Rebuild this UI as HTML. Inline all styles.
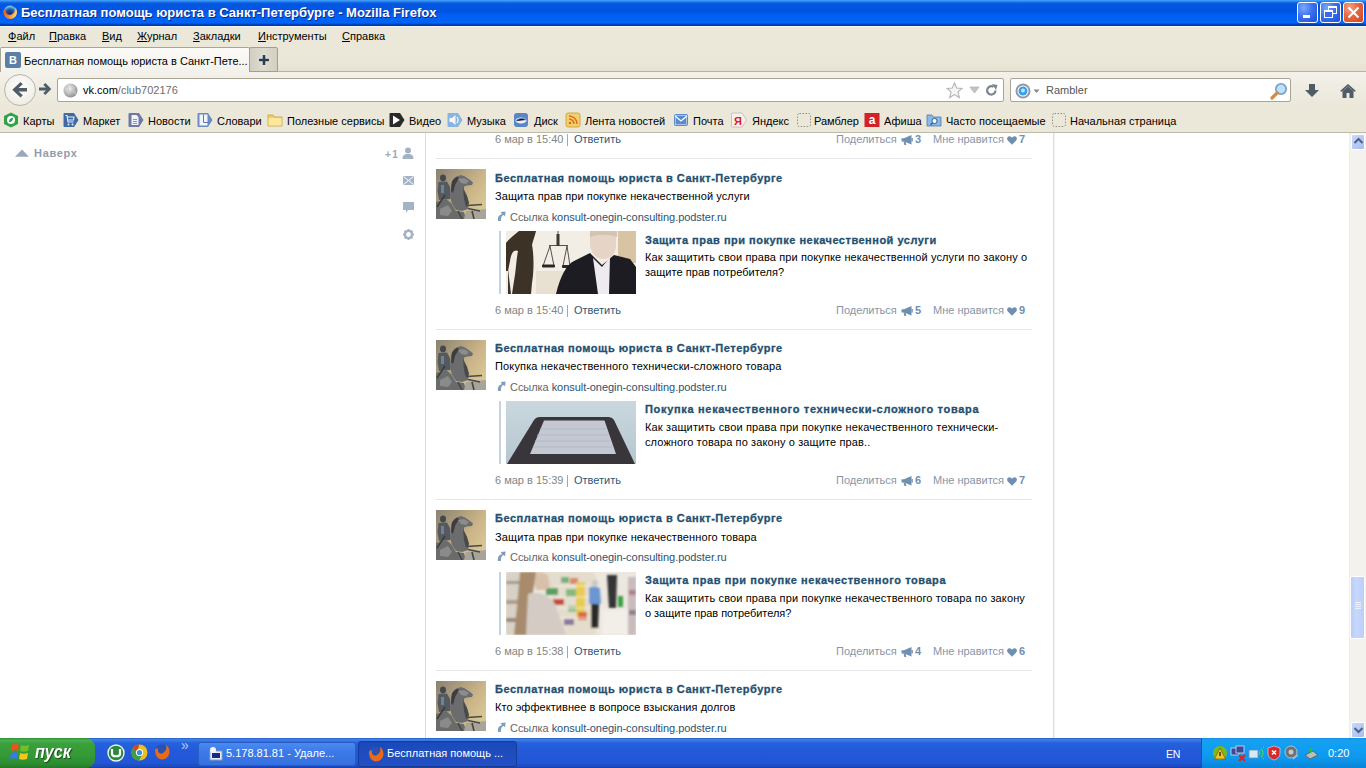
<!DOCTYPE html><html><head><meta charset="utf-8"><style>
*{margin:0;padding:0;box-sizing:border-box}
html,body{width:1366px;height:768px;overflow:hidden;background:#fff;font-family:"Liberation Sans",sans-serif;position:relative}
div,span,svg{position:absolute}
.nw{white-space:nowrap}
#title{left:0;top:0;width:1366px;height:26px;background:linear-gradient(#3d9af9 0,#3d9af9 1px,#1a6ee8 2px,#0557e0 4px,#0054e0 12px,#005ff6 15px,#0064f4 23px,#0048c8 24px,#002e98 26px)}
#title .t{left:21px;top:5px;color:#fff;font-weight:bold;font-size:13px;line-height:16px;text-shadow:1px 1px 0 #0b2a8a}
.wbtn{top:2px;width:21px;height:21px;border:1px solid #fff;border-radius:3px}
#menu{left:0;top:26px;width:1366px;height:21px;background:#ebe8d9;font-size:11px;line-height:13px;color:#000}
#menu span{top:4px}
#tabs{left:0;top:47px;width:1366px;height:25px;background:linear-gradient(#ebe8d9 0,#ebe8d9 60%,#e6e0d0 100%)}
#nav{left:0;top:72px;width:1366px;height:35px;background:linear-gradient(#f3f1ea,#efede3 40%,#ebe8da)}
#bm{left:0;top:107px;width:1366px;height:26px;background:#ebe8d9;font-size:11px;line-height:13px;border-bottom:1px solid #bfbbaa}
#bm span{top:8px;color:#000}
#bm svg{top:5px}
#content{left:0;top:133px;width:1349px;height:605px;background:#fff;overflow:hidden}
#sb{left:1349px;top:133px;width:17px;height:605px;background:#f4f2ec}
#task{left:0;top:738px;width:1366px;height:30px;background:linear-gradient(#1f4fb4 0,#3c80e8 1px,#3a7de6 2px,#2561dd 5px,#2358d8 15px,#2156d6 25px,#1c48b8 29px,#173d9c 30px)}
.f11{font-size:11px;line-height:13px}
.lnk{color:#2b587a}
.ttl{font-weight:bold;letter-spacing:0.5px;color:#24506f;-webkit-text-stroke:0.3px #24506f}
</style></head><body>
<div id="title">
<svg style="left:2px;top:4px" width="16" height="16" viewBox="0 0 16 16">
<defs><linearGradient id="fxg" x1="0" y1="0" x2="1" y2="0.3"><stop offset="0" stop-color="#e8501a"/><stop offset="0.6" stop-color="#f08a30"/><stop offset="1" stop-color="#f8d070"/></linearGradient>
<radialGradient id="fxb" cx="0.5" cy="0.65" r="0.6"><stop offset="0" stop-color="#152a6a"/><stop offset="0.6" stop-color="#2a5aa8"/><stop offset="1" stop-color="#70c8e8"/></radialGradient></defs>
<circle cx="8" cy="7.8" r="6.2" fill="url(#fxb)"/>
<path d="M1.3 6.5 C1 11.5 4.5 15 8.2 15 C12 15 15 12 15 8 C15 5.8 14.2 4.3 13.2 3.3 C13.6 6.5 12 10.2 8.6 10.8 C5.2 11.2 3 8.6 3.2 5 C2.3 5.4 1.6 5.8 1.3 6.5 Z" fill="url(#fxg)"/>
</svg>
<div class="t nw">Бесплатная помощь юриста в Санкт-Петербурге - Mozilla Firefox</div>
<div class="wbtn" style="left:1297px;background:radial-gradient(ellipse at 30% 25%,#7aa8ff 0,#3d72ee 45%,#2a5de0 75%,#2250cf 100%)"><div style="left:5px;top:12px;width:7px;height:3px;background:#fff"></div></div>
<div class="wbtn" style="left:1320px;background:radial-gradient(ellipse at 30% 25%,#7aa8ff 0,#3d72ee 45%,#2a5de0 75%,#2250cf 100%)"><div style="left:7px;top:3px;width:9px;height:8px;border:1px solid #fff;border-top-width:2px"></div><div style="left:3px;top:7px;width:9px;height:8px;border:1px solid #fff;border-top-width:2px;background:#3a6ae6"></div></div>
<div class="wbtn" style="left:1343px;background:radial-gradient(ellipse at 30% 25%,#f7a287 0,#e8653e 45%,#d9512c 80%,#c7421f 100%)">
<svg style="left:3px;top:3px" width="13" height="13" viewBox="0 0 13 13"><path d="M1.5 1.5 L11.5 11.5 M11.5 1.5 L1.5 11.5" stroke="#fff" stroke-width="2"/></svg></div>
</div>
<div id="menu"><div style="left:0;top:0;width:1366px;height:1px;background:#f6f8fc"></div>
<span class="nw" style="left:8px"><u>Ф</u>айл</span>
<span class="nw" style="left:49px"><u>П</u>равка</span>
<span class="nw" style="left:102px"><u>В</u>ид</span>
<span class="nw" style="left:137px"><u>Ж</u>урнал</span>
<span class="nw" style="left:193px"><u>З</u>акладки</span>
<span class="nw" style="left:258px"><u>И</u>нструменты</span>
<span class="nw" style="left:342px"><u>С</u>правка</span>
</div>
<div id="tabs">
<div style="left:0;top:0;width:250px;height:25px;border:1px solid #a9a595;border-bottom:none;border-radius:2px 2px 0 0;background:linear-gradient(#fbfaf7,#f6f5f0 60%,#f3f1ea)"></div>
<div style="left:250px;top:24px;width:1116px;height:1px;background:#b7b3a2"></div>
<div style="left:5px;top:5px;width:16px;height:16px;background:#5b7fa6;border-radius:2px;color:#fff;font-weight:bold;font-size:11px;line-height:16px;text-align:center">В</div>
<span class="nw f11" style="left:24px;top:8px;color:#000">Бесплатная помощь юриста в Санкт-Пете...</span>
<div style="left:249px;top:0;width:29px;height:25px;border:1px solid #a39f8f;border-radius:2px 2px 0 0;background:linear-gradient(90deg,#d2cec0,#dedbcf 50%,#d2cec0)"></div>
<svg style="left:257px;top:6px" width="14" height="14" viewBox="0 0 14 14"><path d="M7 1.5V12.5M1.5 7H12.5" stroke="#dfe8f0" stroke-width="4.5"/><path d="M7 2V12M2 7H12" stroke="#2e3c48" stroke-width="2.6"/></svg>
</div>
<div id="nav">
<div style="left:4px;top:2px;width:32px;height:32px;border-radius:50%;border:1px solid #b9b6a8;background:radial-gradient(circle at 50% 40%,#ffffff,#f0eee6 70%,#e2dfd2)"></div>
<svg style="left:11px;top:9px" width="17" height="17" viewBox="0 0 17 17"><path d="M1.3 8.8 L9.5 1 L11.8 3.3 L7.6 7 H16 V10.6 H7.6 L11.8 14.3 L9.5 16.6 Z" fill="#505c68"/></svg>
<svg style="left:38px;top:10px" width="14" height="14" viewBox="0 0 14 14"><path d="M13.3 7 L7.3 1 L5.3 3 L8 5.5 H1 V8.5 H8 L5.3 11 L7.3 13 Z" fill="#505c68"/></svg>
<div style="left:57px;top:6px;width:947px;height:24px;background:#fff;border:1px solid #a8a597;border-radius:2px"></div>
<svg style="left:63px;top:11px" width="15" height="15" viewBox="0 0 15 15"><defs><radialGradient id="gl" cx="0.4" cy="0.35" r="0.7"><stop offset="0" stop-color="#f4f4f4"/><stop offset="1" stop-color="#8a8a8a"/></radialGradient></defs><circle cx="7.5" cy="7.5" r="7" fill="url(#gl)"/><path d="M3 4 C5 3 6 5 5 7 C4 9 6 10 6 12 M9 2 C8 4 10 5 12 5 M10 9 C11 8 13 9 12 11" stroke="#c8c8c8" stroke-width="1.2" fill="none"/></svg>
<span class="nw" style="left:83px;top:11px;font-size:11px;line-height:14px;color:#000">vk.com<span style="position:static;color:#6d6d6d">/club702176</span></span>
<svg style="left:946px;top:10px" width="17" height="17" viewBox="0 0 17 17"><path d="M8.5 1 L10.7 6 L16 6.4 L12 9.9 L13.3 15.5 L8.5 12.6 L3.7 15.5 L5 9.9 L1 6.4 L6.3 6 Z" fill="#f4f4f4" stroke="#b4b4b4" stroke-width="1.1"/></svg>
<svg style="left:969px;top:14px" width="11" height="8" viewBox="0 0 11 8"><path d="M1 1 H10 L5.5 7 Z" fill="#c4c4c4" stroke="#b4b4b4" stroke-width="0.8"/></svg>
<svg style="left:985px;top:12px" width="13" height="13" viewBox="0 0 13 13"><path d="M10.5 6.5 A4.2 4.2 0 1 1 8.6 2.9" fill="none" stroke="#7b8690" stroke-width="2.2"/><path d="M7 0 L12.5 1 L11 6 Z" fill="#7b8690"/></svg>
<div style="left:1010px;top:6px;width:281px;height:24px;background:#fff;border:1px solid #a8a597;border-radius:2px"></div>
<svg style="left:1015px;top:11px" width="16" height="16" viewBox="0 0 16 16"><circle cx="8" cy="8" r="6.5" fill="none" stroke="#8f9aa6" stroke-width="2"/><circle cx="8" cy="8" r="4.5" fill="#3aa0e8"/><circle cx="8" cy="7.5" r="2" fill="#bfe4ff"/></svg>
<svg style="left:1033px;top:17px" width="8" height="5" viewBox="0 0 8 5"><path d="M0.5 0.5H6.5L3.5 4Z" fill="#8a8a8a"/></svg>
<span class="nw" style="left:1046px;top:11px;font-size:11px;line-height:14px;color:#555">Rambler</span>
<svg style="left:1270px;top:10px" width="18" height="18" viewBox="0 0 18 18"><circle cx="11" cy="7" r="5.2" fill="#bfe0fa" stroke="#6f9ec4" stroke-width="1.6"/><path d="M7.2 10.8 L2 16" stroke="#d68a3c" stroke-width="3.2" stroke-linecap="round"/></svg>
<svg style="left:1304px;top:11px" width="16" height="16" viewBox="0 0 16 16"><path d="M5 1 H11 V7 H15 L8 14 L1 7 H5 Z" fill="#4f5b66"/></svg>
<svg style="left:1339px;top:11px" width="18" height="16" viewBox="0 0 18 16"><path d="M9 1 L17 8 L15.5 8.8 L9 3.3 L2.5 8.8 L1 8 Z" fill="#4f5b66"/><path d="M3.5 8 L9 3.5 L14.5 8 V15 H10.5 V10 H7.5 V15 H3.5 Z" fill="#4f5b66"/></svg>
</div>
<div id="bm">
<svg style="left:3px;top:5px" width="16" height="16" viewBox="0 0 16 16"><path d="M8 0.5 L15 4 V12 L8 15.5 L1 12 V4 Z" fill="#2fa24a"/><circle cx="8" cy="8" r="4" fill="#fff"/><path d="M6 10 C6 7 8 6 10 5.5 C10 8 9 10 6 10Z" fill="#2fa24a"/></svg>
<span class="nw" style="left:23px">Карты</span>
<svg style="left:63px;top:5px" width="16" height="16" viewBox="0 0 16 16"><path d="M1.5 1 H11 L15.5 8 L11 15 H1.5 Q0.5 15 0.5 14 V2 Q0.5 1 1.5 1 Z" fill="#3f6aa6"/><path d="M2.5 3.5 H4 L5 10 H10.5 M4.5 5 H11 L10.5 8 H5" fill="none" stroke="#e8f0fa" stroke-width="1.1"/><circle cx="5.5" cy="12.5" r="1" fill="#e8f0fa"/><circle cx="9.5" cy="12.5" r="1" fill="#e8f0fa"/></svg>
<span class="nw" style="left:83px">Маркет</span>
<svg style="left:128px;top:5px" width="16" height="16" viewBox="0 0 16 16"><path d="M1.5 1 H11 L15.5 8 L11 15 H1.5 Q0.5 15 0.5 14 V2 Q0.5 1 1.5 1 Z" fill="#7078a8"/><path d="M3.5 3 H8.5 L10.5 5 V13 H3.5 Z" fill="#f2f4fa"/><path d="M5 7.5h4M5 9.5h4M5 11.5h4" stroke="#7078a8" stroke-width="0.8"/></svg>
<span class="nw" style="left:148px">Новости</span>
<svg style="left:197px;top:5px" width="16" height="16" viewBox="0 0 16 16"><path d="M1.5 1 H11 L15.5 8 L11 15 H1.5 Q0.5 15 0.5 14 V2 Q0.5 1 1.5 1 Z" fill="#6a8cc0"/><rect x="2.5" y="2.5" width="8" height="11" fill="#f2f5fa"/><path d="M6.5 2.5 V10.5 H12" stroke="#5a7ab0" stroke-width="1" fill="none"/></svg>
<span class="nw" style="left:217px">Словари</span>
<svg style="left:267px;top:5px" width="16" height="16" viewBox="0 0 16 16"><path d="M1 3 H6 L7.5 5 H15 V14 H1 Z" fill="#f0d060" stroke="#c8a030" stroke-width="0.8"/><rect x="1.5" y="6" width="13" height="7.5" fill="#fbe89a"/></svg>
<span class="nw" style="left:287px">Полезные сервисы</span>
<svg style="left:389px;top:5px" width="16" height="16" viewBox="0 0 16 16"><path d="M1.5 1 H11 L15.5 8 L11 15 H1.5 Q0.5 15 0.5 14 V2 Q0.5 1 1.5 1 Z" fill="#2a2a2a"/><path d="M4 3.5 L11 8 L4 12.5 Z" fill="#fff"/></svg>
<span class="nw" style="left:409px">Видео</span>
<svg style="left:447px;top:5px" width="16" height="16" viewBox="0 0 16 16"><path d="M1.5 1 H11 L15.5 8 L11 15 H1.5 Q0.5 15 0.5 14 V2 Q0.5 1 1.5 1 Z" fill="#8ab4e0"/><path d="M2.5 6 H5 L8.5 3 V13 L5 10 H2.5 Z" fill="#f4f8fc"/><path d="M10 5 C11.5 7 11.5 9 10 11" stroke="#fff" stroke-width="1.1" fill="none"/></svg>
<span class="nw" style="left:467px">Музыка</span>
<svg style="left:513px;top:5px" width="16" height="16" viewBox="0 0 16 16"><rect x="1" y="1" width="14" height="14" rx="3" fill="#5a86c8"/><ellipse cx="8" cy="8.5" rx="5.5" ry="3" fill="#e8f0fa"/><path d="M3 9 C6 6 10 6 13 8" stroke="#5a86c8" stroke-width="1"/></svg>
<span class="nw" style="left:534px">Диск</span>
<svg style="left:565px;top:5px" width="16" height="16" viewBox="0 0 16 16"><rect x="1" y="1" width="14" height="14" rx="2" fill="#f2d070" stroke="#c89a30" stroke-width="0.8"/><circle cx="5" cy="11" r="1.3" fill="#e06a10"/><path d="M4 7 A5 5 0 0 1 9 12 M4 4 A8 8 0 0 1 12 12" stroke="#e06a10" stroke-width="1.4" fill="none"/></svg>
<span class="nw" style="left:585px">Лента новостей</span>
<svg style="left:673px;top:5px" width="16" height="16" viewBox="0 0 16 16"><rect x="1" y="2" width="14" height="12" rx="2" fill="#5a8ad0"/><path d="M2 4 L8 9 L14 4" stroke="#fff" stroke-width="1.3" fill="none"/><rect x="2.5" y="3.5" width="11" height="9" fill="none" stroke="#dfe8f6" stroke-width="0.6"/></svg>
<span class="nw" style="left:693px">Почта</span>
<svg style="left:731px;top:5px" width="16" height="16" viewBox="0 0 16 16"><path d="M1.5 1 H11 L15.5 8 L11 15 H1.5 Q0.5 15 0.5 14 V2 Q0.5 1 1.5 1 Z" fill="#f4f2f0" stroke="#c0b8b0" stroke-width="0.8"/><text x="7" y="12.5" font-size="11" font-weight="bold" text-anchor="middle" fill="#e02020" font-family="Liberation Sans">Я</text></svg>
<span class="nw" style="left:752px">Яндекс</span>
<svg style="left:796px;top:5px" width="16" height="16" viewBox="0 0 16 16"><rect x="1.5" y="1.5" width="13" height="13" rx="2" fill="none" stroke="#777" stroke-width="0.8" stroke-dasharray="1.5 1.5"/></svg>
<span class="nw" style="left:814px">Рамблер</span>
<svg style="left:864px;top:5px" width="16" height="16" viewBox="0 0 16 16"><rect x="0.5" y="1" width="15" height="14" fill="#d42026"/><text x="8" y="12" font-size="12" font-weight="bold" text-anchor="middle" fill="#fff" font-family="Liberation Sans">a</text></svg>
<span class="nw" style="left:884px">Афиша</span>
<svg style="left:926px;top:5px" width="16" height="16" viewBox="0 0 16 16"><path d="M1 3 H6 L7.5 5 H15 V14 H1 Z" fill="#8ab8e8" stroke="#4a7ab8" stroke-width="0.8"/><circle cx="8.5" cy="9" r="2.6" fill="#fff" stroke="#2a5a98" stroke-width="1"/><path d="M6.5 11 L4.5 13" stroke="#2a5a98" stroke-width="1.3"/></svg>
<span class="nw" style="left:946px">Часто посещаемые</span>
<svg style="left:1051px;top:5px" width="16" height="16" viewBox="0 0 16 16"><rect x="1.5" y="1.5" width="13" height="13" rx="2" fill="none" stroke="#777" stroke-width="0.8" stroke-dasharray="1.5 1.5"/></svg>
<span class="nw" style="left:1070px">Начальная страница</span>
</div>
<div id="content">
<div style="left:425px;top:0;width:1px;height:605px;background:#dcdcdc"></div>
<div style="left:1053px;top:0;width:1px;height:605px;background:#dcdcdc"></div>
<div style="left:1054px;top:0;width:1px;height:605px;background:#f3f3f3"></div>
</div>
<svg style="left:15px;top:149px" width="14" height="8" viewBox="0 0 14 8"><path d="M7 0.5 L14 7.8 H0 Z" fill="#9aa8bc"/></svg>
<span class="nw f11" style="left:34px;top:147px;font-weight:bold;color:#909cac;letter-spacing:0.7px">Наверх</span>
<span class="nw" style="left:385px;top:149px;font-size:10px;line-height:12px;font-weight:bold;color:#a0a8b4;letter-spacing:1.5px">+1</span>
<svg style="left:402px;top:147px" width="12" height="12" viewBox="0 0 12 12"><circle cx="6" cy="3.5" r="3" fill="#a4b2c4"/><path d="M0.5 12 C0.5 8 2.5 7 6 7 C9.5 7 11.5 8 11.5 12 Z" fill="#a4b2c4"/></svg>
<svg style="left:403px;top:176px" width="11" height="9" viewBox="0 0 11 9"><rect width="11" height="9" fill="#a4b4c8"/><path d="M0.5 0.5 L10.5 8.5 M10.5 0.5 L0.5 8.5" stroke="#fff" stroke-width="1"/></svg>
<svg style="left:403px;top:202px" width="11" height="12" viewBox="0 0 11 12"><path d="M0 0 H11 V8 H5 L3 11 V8 H0 Z" fill="#a4b4c8"/></svg>
<svg style="left:403px;top:229px" width="11" height="11" viewBox="0 0 11 11"><circle cx="5.5" cy="5.5" r="3.6" fill="none" stroke="#a4b2c4" stroke-width="2.4"/><path d="M5.5 0 V2.2 M5.5 8.8 V11 M0 5.5 H2.2 M8.8 5.5 H11 M1.6 1.6 L3.1 3.1 M7.9 7.9 L9.4 9.4 M9.4 1.6 L7.9 3.1 M3.1 7.9 L1.6 9.4" stroke="#a4b2c4" stroke-width="2"/></svg>
<span class="nw f11" style="left:495px;top:133px;color:#858585">6 мар в 15:40</span>
<div style="left:567px;top:134px;width:1px;height:12px;background:#a8a8a8"></div>
<span class="nw f11 lnk" style="left:574px;top:133px">Ответить</span>
<span class="nw f11" style="left:836px;top:133px;color:#8596a8">Поделиться</span>
<svg style="left:901px;top:135px" width="12" height="10" viewBox="0 0 12 10"><path d="M0.5 3.2 H3 L10.5 0 V9.5 L3 6.5 H0.5 Z" fill="#6f8fb0"/><path d="M2.5 6.5 L4.5 6.5 L5.3 10 L3.4 10 Z" fill="#6f8fb0"/><rect x="10.5" y="3" width="1.3" height="3.5" fill="#6f8fb0"/></svg>
<span class="nw f11" style="left:915px;top:133px;color:#6f8fb0;font-weight:bold">3</span>
<span class="nw f11" style="left:933px;top:133px;color:#8596a8">Мне нравится</span>
<svg style="left:1007px;top:136px" width="10" height="9" viewBox="0 0 10 9"><path d="M5 8.8 L0.8 4.5 C-0.5 3 0 0.3 2.5 0.2 C3.7 0.2 4.5 1 5 1.8 C5.5 1 6.3 0.2 7.5 0.2 C10 0.3 10.5 3 9.2 4.5 Z" fill="#6f8fb0"/></svg>
<span class="nw f11" style="left:1019px;top:133px;color:#6f8fb0;font-weight:bold">7</span>
<div style="left:436px;top:158px;width:596px;height:1px;background:#e4e6ea"></div>
<svg style="left:436px;top:169px" width="50" height="50" viewBox="0 0 50 50">
<defs><linearGradient id="avg1" x1="0" y1="0" x2="1" y2="0.7"><stop offset="0" stop-color="#8a8272"/><stop offset="0.35" stop-color="#ab9c7c"/><stop offset="0.7" stop-color="#cdb68a"/><stop offset="1" stop-color="#d8c794"/></linearGradient>
<filter id="avf1" x="-5%" y="-5%" width="110%" height="110%"><feGaussianBlur stdDeviation="0.6"/></filter></defs>
<rect width="50" height="50" fill="url(#avg1)"/>
<g filter="url(#avf1)">
<ellipse cx="7" cy="9" rx="3" ry="3.4" fill="#44484c"/>
<path d="M2.5 13 L11 12.5 L14 18 L14.5 30 L3 31 L1.5 22 Z" fill="#535a62"/>
<path d="M5 16 L8 16 L8 24 L5 24 Z" fill="#7a8088"/>
<path d="M15 15 L18 9 L22 7 L25 6 L29 7.5 L34 11 L37 13.5 L36 16 L31 16.5 L28 17.5 L28 21 L31 27 L33 34 L32 40 L26 42 L20 41 L16 35 L14 27 Z" fill="#6a6c6e"/>
<path d="M16 12 L21 7.5 L23 9 L19 16 L17 24 L15 22 Z" fill="#3e3e3e"/>
<path d="M22 10 L28 9 L33 12 L30 15 L25 14 Z" fill="#8c8c8a"/>
<path d="M27 19 L31 27 L33 34 L30 38 L28 30 Z" fill="#4a4a4a"/>
<path d="M0 33 L10 30 L15 34 L20 42 L28 43 L30 50 L0 50 Z" fill="#6a6c6c"/>
<path d="M4 40 L12 36 L16 42 L12 47 L4 46 Z" fill="#8a8a88"/>
<path d="M30 42 L50 40 V50 H28 Z" fill="#a8a49a"/>
<path d="M31 36.5 L46 35.5 M32 39.5 L44 42" stroke="#4a4a4a" stroke-width="1.5"/>
<path d="M1 38 L9 26" stroke="#3a3a3a" stroke-width="1.4"/>
<path d="M22 42 L26 50 M36 42 L38 50" stroke="#444" stroke-width="1.6"/>
</g>
</svg>
<span class="nw f11 ttl" style="left:495px;top:172px;letter-spacing:0.52px">Бесплатная помощь юриста в Санкт-Петербурге</span>
<span class="nw f11" style="left:495px;top:190px;color:#000;letter-spacing:0.09px">Защита прав при покупке некачественной услуги</span>
<svg style="left:497px;top:211px" width="9" height="11" viewBox="0 0 9 11"><path d="M1 10 C0.5 6 2 3.5 5 3.2 L3.8 1 L8.5 0.6 L8.2 5.5 L6.8 4 C5 4.3 3.8 6 3.8 10 Z" fill="#7f9cbc"/></svg>
<span class="nw f11" style="left:510px;top:211px;color:#666;letter-spacing:-0.05px">Ссылка <span style="position:static;color:#2b5272">konsult-onegin-consulting.podster.ru</span></span>
<div style="left:499px;top:231px;width:2px;height:63px;background:#c5d2e0"></div>
<svg style="left:506px;top:231px" width="130" height="63" viewBox="0 0 130 63">
<defs><filter id="a1f" x="-2%" y="-2%" width="104%" height="104%"><feGaussianBlur stdDeviation="0.7"/></filter></defs>
<rect width="130" height="63" fill="#f2eee6"/>
<g filter="url(#a1f)">
<rect x="30" y="40" width="60" height="23" fill="#e8e0d0"/>
<rect x="112" width="18" height="32" fill="#d8c4a2"/>
<path d="M13 0 H30 C29 5 27 9 26 14 C28 24 28 40 26 52 L25 63 H6 L8 50 C10 40 10 30 12 20 C8 18 5 22 4 30 L2 40 L0 40 V12 C3 8 8 4 13 0 Z" fill="#3c3028"/>
<path d="M2 38 L5 63 H2 Z" fill="#3c3028"/>
<path d="M52 0 V14 M43 14.5 H62 M44 15 L37 35 M44 15 L48 35 M61 15 L57 35 M61 15 L64 35" stroke="#44403c" stroke-width="0.9" fill="none"/>
<rect x="50.5" y="3" width="3" height="12" fill="#3a3836"/>
<rect x="36" y="33.5" width="13" height="3" rx="1" fill="#2a2826"/><rect x="56" y="34" width="9" height="3" rx="1" fill="#2a2826"/>
<path d="M84 4 C86 0 108 -1 110 4 L110 14 C110 24 104 28 97 28 C90 28 85 22 84 14 Z" fill="#e6d4c6"/>
<path d="M84 0 H111 V6 C104 3 92 3 84 6 Z" fill="#d2c4ae"/>
<path d="M50 63 C54 46 60 34 68 30 L84 22 L96 34 L108 24 L124 28 L130 36 V63 Z" fill="#1c1c22"/>
<path d="M87 27 L96 36 L104 26 L103 63 H92 Z" fill="#eeeaf0"/>
</g>
</svg>
<span class="nw f11 ttl" style="left:645px;top:234px;letter-spacing:0.5px">Защита прав при покупке некачественной услуги</span>
<span class="nw f11" style="left:645px;top:251px;color:#000;letter-spacing:0.116px">Как защитить свои права при покупке некачественной услуги по закону о</span>
<span class="nw f11" style="left:645px;top:266px;color:#000;letter-spacing:0.04px">защите прав потребителя?</span>
<span class="nw f11" style="left:495px;top:304px;color:#858585">6 мар в 15:40</span>
<div style="left:567px;top:305px;width:1px;height:12px;background:#a8a8a8"></div>
<span class="nw f11 lnk" style="left:574px;top:304px">Ответить</span>
<span class="nw f11" style="left:836px;top:304px;color:#8596a8">Поделиться</span>
<svg style="left:901px;top:306px" width="12" height="10" viewBox="0 0 12 10"><path d="M0.5 3.2 H3 L10.5 0 V9.5 L3 6.5 H0.5 Z" fill="#6f8fb0"/><path d="M2.5 6.5 L4.5 6.5 L5.3 10 L3.4 10 Z" fill="#6f8fb0"/><rect x="10.5" y="3" width="1.3" height="3.5" fill="#6f8fb0"/></svg>
<span class="nw f11" style="left:915px;top:304px;color:#6f8fb0;font-weight:bold">5</span>
<span class="nw f11" style="left:933px;top:304px;color:#8596a8">Мне нравится</span>
<svg style="left:1007px;top:307px" width="10" height="9" viewBox="0 0 10 9"><path d="M5 8.8 L0.8 4.5 C-0.5 3 0 0.3 2.5 0.2 C3.7 0.2 4.5 1 5 1.8 C5.5 1 6.3 0.2 7.5 0.2 C10 0.3 10.5 3 9.2 4.5 Z" fill="#6f8fb0"/></svg>
<span class="nw f11" style="left:1019px;top:304px;color:#6f8fb0;font-weight:bold">9</span>
<div style="left:436px;top:329px;width:596px;height:1px;background:#e4e6ea"></div>
<svg style="left:436px;top:340px" width="50" height="50" viewBox="0 0 50 50">
<defs><linearGradient id="avg2" x1="0" y1="0" x2="1" y2="0.7"><stop offset="0" stop-color="#8a8272"/><stop offset="0.35" stop-color="#ab9c7c"/><stop offset="0.7" stop-color="#cdb68a"/><stop offset="1" stop-color="#d8c794"/></linearGradient>
<filter id="avf2" x="-5%" y="-5%" width="110%" height="110%"><feGaussianBlur stdDeviation="0.6"/></filter></defs>
<rect width="50" height="50" fill="url(#avg2)"/>
<g filter="url(#avf2)">
<ellipse cx="7" cy="9" rx="3" ry="3.4" fill="#44484c"/>
<path d="M2.5 13 L11 12.5 L14 18 L14.5 30 L3 31 L1.5 22 Z" fill="#535a62"/>
<path d="M5 16 L8 16 L8 24 L5 24 Z" fill="#7a8088"/>
<path d="M15 15 L18 9 L22 7 L25 6 L29 7.5 L34 11 L37 13.5 L36 16 L31 16.5 L28 17.5 L28 21 L31 27 L33 34 L32 40 L26 42 L20 41 L16 35 L14 27 Z" fill="#6a6c6e"/>
<path d="M16 12 L21 7.5 L23 9 L19 16 L17 24 L15 22 Z" fill="#3e3e3e"/>
<path d="M22 10 L28 9 L33 12 L30 15 L25 14 Z" fill="#8c8c8a"/>
<path d="M27 19 L31 27 L33 34 L30 38 L28 30 Z" fill="#4a4a4a"/>
<path d="M0 33 L10 30 L15 34 L20 42 L28 43 L30 50 L0 50 Z" fill="#6a6c6c"/>
<path d="M4 40 L12 36 L16 42 L12 47 L4 46 Z" fill="#8a8a88"/>
<path d="M30 42 L50 40 V50 H28 Z" fill="#a8a49a"/>
<path d="M31 36.5 L46 35.5 M32 39.5 L44 42" stroke="#4a4a4a" stroke-width="1.5"/>
<path d="M1 38 L9 26" stroke="#3a3a3a" stroke-width="1.4"/>
<path d="M22 42 L26 50 M36 42 L38 50" stroke="#444" stroke-width="1.6"/>
</g>
</svg>
<span class="nw f11 ttl" style="left:495px;top:342px;letter-spacing:0.52px">Бесплатная помощь юриста в Санкт-Петербурге</span>
<span class="nw f11" style="left:495px;top:360px;color:#000;letter-spacing:0.143px">Покупка некачественного технически-сложного товара</span>
<svg style="left:497px;top:381px" width="9" height="11" viewBox="0 0 9 11"><path d="M1 10 C0.5 6 2 3.5 5 3.2 L3.8 1 L8.5 0.6 L8.2 5.5 L6.8 4 C5 4.3 3.8 6 3.8 10 Z" fill="#7f9cbc"/></svg>
<span class="nw f11" style="left:510px;top:381px;color:#666;letter-spacing:-0.05px">Ссылка <span style="position:static;color:#2b5272">konsult-onegin-consulting.podster.ru</span></span>
<div style="left:499px;top:401px;width:2px;height:63px;background:#c5d2e0"></div>
<svg style="left:506px;top:401px" width="130" height="63" viewBox="0 0 130 63">
<defs><linearGradient id="a2bg" x1="0" y1="0" x2="0" y2="1"><stop offset="0" stop-color="#cad8de"/><stop offset="1" stop-color="#b6c6d0"/></linearGradient>
<filter id="a2f" x="-2%" y="-2%" width="104%" height="104%"><feGaussianBlur stdDeviation="0.5"/></filter></defs>
<rect width="130" height="63" fill="url(#a2bg)"/>
<g filter="url(#a2f)">
<path d="M1 63 L28 19 Q30 16 34 16 H102 Q106 16 108 19 L129 63 Z" fill="#38343a"/>
<path d="M24 53 L38 19.5 H98.5 L110 53 Z" fill="#c4c8d2"/>
<path d="M34 28 H100 M31 34 H102 M29 40 H104 M27 46 H106" stroke="#b0b4c0" stroke-width="0.8"/>
</g>
</svg>
<span class="nw f11 ttl" style="left:645px;top:403px;letter-spacing:0.68px">Покупка некачественного технически-сложного товара</span>
<span class="nw f11" style="left:645px;top:421px;color:#000;letter-spacing:0.145px">Как защитить свои права при покупке некачественного технически-</span>
<span class="nw f11" style="left:645px;top:436px;color:#000;letter-spacing:0.12px">сложного товара по закону о защите прав..</span>
<span class="nw f11" style="left:495px;top:474px;color:#858585">6 мар в 15:39</span>
<div style="left:567px;top:475px;width:1px;height:12px;background:#a8a8a8"></div>
<span class="nw f11 lnk" style="left:574px;top:474px">Ответить</span>
<span class="nw f11" style="left:836px;top:474px;color:#8596a8">Поделиться</span>
<svg style="left:901px;top:476px" width="12" height="10" viewBox="0 0 12 10"><path d="M0.5 3.2 H3 L10.5 0 V9.5 L3 6.5 H0.5 Z" fill="#6f8fb0"/><path d="M2.5 6.5 L4.5 6.5 L5.3 10 L3.4 10 Z" fill="#6f8fb0"/><rect x="10.5" y="3" width="1.3" height="3.5" fill="#6f8fb0"/></svg>
<span class="nw f11" style="left:915px;top:474px;color:#6f8fb0;font-weight:bold">6</span>
<span class="nw f11" style="left:933px;top:474px;color:#8596a8">Мне нравится</span>
<svg style="left:1007px;top:477px" width="10" height="9" viewBox="0 0 10 9"><path d="M5 8.8 L0.8 4.5 C-0.5 3 0 0.3 2.5 0.2 C3.7 0.2 4.5 1 5 1.8 C5.5 1 6.3 0.2 7.5 0.2 C10 0.3 10.5 3 9.2 4.5 Z" fill="#6f8fb0"/></svg>
<span class="nw f11" style="left:1019px;top:474px;color:#6f8fb0;font-weight:bold">7</span>
<div style="left:436px;top:499px;width:596px;height:1px;background:#e4e6ea"></div>
<svg style="left:436px;top:510px" width="50" height="50" viewBox="0 0 50 50">
<defs><linearGradient id="avg3" x1="0" y1="0" x2="1" y2="0.7"><stop offset="0" stop-color="#8a8272"/><stop offset="0.35" stop-color="#ab9c7c"/><stop offset="0.7" stop-color="#cdb68a"/><stop offset="1" stop-color="#d8c794"/></linearGradient>
<filter id="avf3" x="-5%" y="-5%" width="110%" height="110%"><feGaussianBlur stdDeviation="0.6"/></filter></defs>
<rect width="50" height="50" fill="url(#avg3)"/>
<g filter="url(#avf3)">
<ellipse cx="7" cy="9" rx="3" ry="3.4" fill="#44484c"/>
<path d="M2.5 13 L11 12.5 L14 18 L14.5 30 L3 31 L1.5 22 Z" fill="#535a62"/>
<path d="M5 16 L8 16 L8 24 L5 24 Z" fill="#7a8088"/>
<path d="M15 15 L18 9 L22 7 L25 6 L29 7.5 L34 11 L37 13.5 L36 16 L31 16.5 L28 17.5 L28 21 L31 27 L33 34 L32 40 L26 42 L20 41 L16 35 L14 27 Z" fill="#6a6c6e"/>
<path d="M16 12 L21 7.5 L23 9 L19 16 L17 24 L15 22 Z" fill="#3e3e3e"/>
<path d="M22 10 L28 9 L33 12 L30 15 L25 14 Z" fill="#8c8c8a"/>
<path d="M27 19 L31 27 L33 34 L30 38 L28 30 Z" fill="#4a4a4a"/>
<path d="M0 33 L10 30 L15 34 L20 42 L28 43 L30 50 L0 50 Z" fill="#6a6c6c"/>
<path d="M4 40 L12 36 L16 42 L12 47 L4 46 Z" fill="#8a8a88"/>
<path d="M30 42 L50 40 V50 H28 Z" fill="#a8a49a"/>
<path d="M31 36.5 L46 35.5 M32 39.5 L44 42" stroke="#4a4a4a" stroke-width="1.5"/>
<path d="M1 38 L9 26" stroke="#3a3a3a" stroke-width="1.4"/>
<path d="M22 42 L26 50 M36 42 L38 50" stroke="#444" stroke-width="1.6"/>
</g>
</svg>
<span class="nw f11 ttl" style="left:495px;top:512px;letter-spacing:0.52px">Бесплатная помощь юриста в Санкт-Петербурге</span>
<span class="nw f11" style="left:495px;top:531px;color:#000;letter-spacing:0.11px">Защита прав при покупке некачественного товара</span>
<svg style="left:497px;top:551px" width="9" height="11" viewBox="0 0 9 11"><path d="M1 10 C0.5 6 2 3.5 5 3.2 L3.8 1 L8.5 0.6 L8.2 5.5 L6.8 4 C5 4.3 3.8 6 3.8 10 Z" fill="#7f9cbc"/></svg>
<span class="nw f11" style="left:510px;top:551px;color:#666;letter-spacing:-0.05px">Ссылка <span style="position:static;color:#2b5272">konsult-onegin-consulting.podster.ru</span></span>
<div style="left:499px;top:572px;width:2px;height:63px;background:#c5d2e0"></div>
<svg style="left:506px;top:572px" width="130" height="63" viewBox="0 0 130 63">
<defs><filter id="a3f" x="-2%" y="-2%" width="104%" height="104%"><feGaussianBlur stdDeviation="1"/></filter></defs>
<rect width="130" height="63" fill="#ece8e0"/>
<g filter="url(#a3f)">
<rect x="0" width="16" height="63" fill="#d8d2c6"/>
<rect x="0" y="9" width="15" height="3" fill="#a49a8c"/><rect x="0" y="28" width="15" height="4" fill="#b0988a"/><rect x="0" y="46" width="15" height="4" fill="#988878"/>
<path d="M40 0 H88 L92 10 L90 63 H56 Z" fill="#e4dccc"/>
<rect x="40" y="16" width="12" height="7" fill="#5aa060"/>
<rect x="47" y="27" width="11" height="6" fill="#c84838"/>
<rect x="55" y="5" width="8" height="6" fill="#78b078"/>
<rect x="60" y="17" width="12" height="8" fill="#88b880"/>
<rect x="64" y="6" width="8" height="6" fill="#d88868"/>
<rect x="70" y="10" width="9" height="35" fill="#e8cc50"/>
<rect x="72" y="40" width="9" height="8" fill="#d86a48"/>
<rect x="58" y="47" width="10" height="6" fill="#8a78a0"/>
<rect x="62" y="34" width="8" height="6" fill="#90c088"/>
<path d="M48 14 H90 M50 25 H88 M52 36 H86 M54 46 H84" stroke="#f4efe4" stroke-width="1.2"/>
<path d="M101 3 H111 L110 36 H103 Z" fill="#363636"/>
<rect x="112" y="24" width="5" height="11" fill="#3aa040"/>
<rect x="96" y="38" width="26" height="25" fill="#f2eee8"/>
<rect x="122" y="5" width="8" height="58" fill="#c8bcbc"/>
<rect x="123" y="18" width="7" height="5" fill="#b08090"/><rect x="123" y="38" width="7" height="5" fill="#908090"/>
<circle cx="89" cy="11" r="3" fill="#c8c8c8"/>
<path d="M83 16 C85 14 92 14 94 17 L95 32 H83 Z" fill="#6a96d2"/>
<path d="M85 32 H93 L92 56 H85 Z" fill="#2a2a2a"/>
<path d="M26 4 C28 -1 40 -1 42 4 L44 14 L40 18 L30 18 Z" fill="#d8c0aa"/>
<path d="M14 0 H30 L27 20 L24 44 L22 63 H8 L11 34 Z" fill="#a88a6c"/>
<path d="M22 22 C30 19 42 22 48 30 L60 63 H20 Z" fill="#d4ccc4"/>
</g>
</svg>
<span class="nw f11 ttl" style="left:645px;top:574px;letter-spacing:0.57px">Защита прав при покупке некачественного товара</span>
<span class="nw f11" style="left:645px;top:592px;color:#000;letter-spacing:0.134px">Как защитить свои права при покупке некачественного товара по закону</span>
<span class="nw f11" style="left:645px;top:607px;color:#000;letter-spacing:-0.04px">о защите прав потребителя?</span>
<span class="nw f11" style="left:495px;top:645px;color:#858585">6 мар в 15:38</span>
<div style="left:567px;top:646px;width:1px;height:12px;background:#a8a8a8"></div>
<span class="nw f11 lnk" style="left:574px;top:645px">Ответить</span>
<span class="nw f11" style="left:836px;top:645px;color:#8596a8">Поделиться</span>
<svg style="left:901px;top:647px" width="12" height="10" viewBox="0 0 12 10"><path d="M0.5 3.2 H3 L10.5 0 V9.5 L3 6.5 H0.5 Z" fill="#6f8fb0"/><path d="M2.5 6.5 L4.5 6.5 L5.3 10 L3.4 10 Z" fill="#6f8fb0"/><rect x="10.5" y="3" width="1.3" height="3.5" fill="#6f8fb0"/></svg>
<span class="nw f11" style="left:915px;top:645px;color:#6f8fb0;font-weight:bold">4</span>
<span class="nw f11" style="left:933px;top:645px;color:#8596a8">Мне нравится</span>
<svg style="left:1007px;top:648px" width="10" height="9" viewBox="0 0 10 9"><path d="M5 8.8 L0.8 4.5 C-0.5 3 0 0.3 2.5 0.2 C3.7 0.2 4.5 1 5 1.8 C5.5 1 6.3 0.2 7.5 0.2 C10 0.3 10.5 3 9.2 4.5 Z" fill="#6f8fb0"/></svg>
<span class="nw f11" style="left:1019px;top:645px;color:#6f8fb0;font-weight:bold">6</span>
<div style="left:436px;top:670px;width:596px;height:1px;background:#e4e6ea"></div>
<svg style="left:436px;top:681px" width="50" height="50" viewBox="0 0 50 50">
<defs><linearGradient id="avg4" x1="0" y1="0" x2="1" y2="0.7"><stop offset="0" stop-color="#8a8272"/><stop offset="0.35" stop-color="#ab9c7c"/><stop offset="0.7" stop-color="#cdb68a"/><stop offset="1" stop-color="#d8c794"/></linearGradient>
<filter id="avf4" x="-5%" y="-5%" width="110%" height="110%"><feGaussianBlur stdDeviation="0.6"/></filter></defs>
<rect width="50" height="50" fill="url(#avg4)"/>
<g filter="url(#avf4)">
<ellipse cx="7" cy="9" rx="3" ry="3.4" fill="#44484c"/>
<path d="M2.5 13 L11 12.5 L14 18 L14.5 30 L3 31 L1.5 22 Z" fill="#535a62"/>
<path d="M5 16 L8 16 L8 24 L5 24 Z" fill="#7a8088"/>
<path d="M15 15 L18 9 L22 7 L25 6 L29 7.5 L34 11 L37 13.5 L36 16 L31 16.5 L28 17.5 L28 21 L31 27 L33 34 L32 40 L26 42 L20 41 L16 35 L14 27 Z" fill="#6a6c6e"/>
<path d="M16 12 L21 7.5 L23 9 L19 16 L17 24 L15 22 Z" fill="#3e3e3e"/>
<path d="M22 10 L28 9 L33 12 L30 15 L25 14 Z" fill="#8c8c8a"/>
<path d="M27 19 L31 27 L33 34 L30 38 L28 30 Z" fill="#4a4a4a"/>
<path d="M0 33 L10 30 L15 34 L20 42 L28 43 L30 50 L0 50 Z" fill="#6a6c6c"/>
<path d="M4 40 L12 36 L16 42 L12 47 L4 46 Z" fill="#8a8a88"/>
<path d="M30 42 L50 40 V50 H28 Z" fill="#a8a49a"/>
<path d="M31 36.5 L46 35.5 M32 39.5 L44 42" stroke="#4a4a4a" stroke-width="1.5"/>
<path d="M1 38 L9 26" stroke="#3a3a3a" stroke-width="1.4"/>
<path d="M22 42 L26 50 M36 42 L38 50" stroke="#444" stroke-width="1.6"/>
</g>
</svg>
<span class="nw f11 ttl" style="left:495px;top:683px;letter-spacing:0.52px">Бесплатная помощь юриста в Санкт-Петербурге</span>
<span class="nw f11" style="left:495px;top:701px;color:#000;letter-spacing:0.05px">Кто эффективнее в вопросе взыскания долгов</span>
<svg style="left:497px;top:722px" width="9" height="11" viewBox="0 0 9 11"><path d="M1 10 C0.5 6 2 3.5 5 3.2 L3.8 1 L8.5 0.6 L8.2 5.5 L6.8 4 C5 4.3 3.8 6 3.8 10 Z" fill="#7f9cbc"/></svg>
<span class="nw f11" style="left:510px;top:722px;color:#666;letter-spacing:-0.05px">Ссылка <span style="position:static;color:#2b5272">konsult-onegin-consulting.podster.ru</span></span>
<div id="sb">
<div style="left:0;top:0;width:1px;height:605px;background:#eeede6"></div>
<div style="left:2px;top:1px;width:14px;height:16px;border:1px solid #fff;border-radius:2px;background:linear-gradient(135deg,#c8d8fc,#b4c8f6 60%,#a8bcee)"></div><svg style="left:2px;top:1px" width="15" height="16" viewBox="0 0 15 16"><path d="M3.5 9 L7.5 5 L11.5 9" stroke="#4d6185" stroke-width="2" fill="none"/></svg>
<div style="left:2px;top:589px;width:14px;height:16px;border:1px solid #fff;border-radius:2px;background:linear-gradient(135deg,#c8d8fc,#b4c8f6 60%,#a8bcee)"></div><svg style="left:2px;top:589px" width="15" height="16" viewBox="0 0 15 16"><path d="M3.5 6 L7.5 10 L11.5 6" stroke="#4d6185" stroke-width="2" fill="none"/></svg>
<div style="left:1px;top:443px;width:15px;height:63px;border:1px solid #fff;border-radius:2px;background:linear-gradient(90deg,#b8ccf8,#c8d8fc 40%,#bccff8)"></div>
<div style="left:6px;top:469px;width:6px;height:1px;background:#eef2fe;box-shadow:0 2px 0 #eef2fe,0 4px 0 #eef2fe,0 6px 0 #eef2fe"></div>
</div>
<div id="task">
<div style="left:0;top:0;width:95px;height:30px;border-radius:0 9px 9px 0;background:linear-gradient(#2a8a2e 0,#4cb050 2px,#3aa03c 6px,#329a36 18px,#2c8c30 26px,#237a26 30px)"></div>
<svg style="left:10px;top:5px" width="20" height="18" viewBox="0 0 20 18"><path d="M2 2 C5 0 7 1 9 2 L8 8 C6 7 4 7 1 8 Z" fill="#e8541c"/><path d="M11 2 C13 3 16 3 19 2 L18 8 C15 9 13 9 10 8 Z" fill="#6cc028"/><path d="M1 10 C4 9 6 9 8 10 L7 16 C5 15 3 15 0 16 Z" fill="#3a7ae8"/><path d="M10 10 C12 11 15 11 18 10 L17 16 C14 17 12 17 9 16 Z" fill="#f4c81a"/></svg>
<span class="nw" style="left:35px;top:3px;font-size:19px;line-height:22px;font-weight:bold;font-style:italic;color:#fff;text-shadow:1px 1px 1px #1a4a1a;transform:scaleX(0.85);transform-origin:0 0">пуск</span>
<svg style="left:107px;top:6px" width="18" height="18" viewBox="0 0 18 18"><circle cx="9" cy="9" r="8" fill="#2a8a3a" stroke="#e8f4e8" stroke-width="1.4"/><path d="M5 5 V10 C5 13 13 13 13 10 V5" stroke="#fff" stroke-width="2.2" fill="none"/></svg>
<svg style="left:131px;top:6px" width="17" height="17" viewBox="0 0 17 17"><circle cx="8.5" cy="8.5" r="8" fill="#e8c020"/><path d="M8.5 0.5 A8 8 0 0 0 1.6 4.5 L5 10 Z" fill="#d84030"/><path d="M1.6 4.5 A8 8 0 0 0 8 16.5 L11 11 Z" fill="#3aa048"/><circle cx="8.5" cy="8.5" r="3.6" fill="#fff"/><circle cx="8.5" cy="8.5" r="2.6" fill="#4a88e0"/></svg>
<svg style="left:154px;top:6px" width="16" height="16" viewBox="0 0 16 16"><circle cx="8" cy="8" r="7.5" fill="#2a50b0"/><path d="M1 6 C1 12 4 15.5 8 15.5 C12 15.5 15.5 12 15.5 8 C15.5 5 14 2 12 1 C13 4 12 7 10 8 C9 9.5 7 10 5.5 9 C4 8 3.5 6.5 4 4 C2.5 4.5 1 5 1 6Z" fill="#e86a1a"/></svg>
<span class="nw" style="left:181px;top:-1px;font-size:14px;line-height:16px;color:#b8ccf4">»</span>
<div style="left:198px;top:4px;width:158px;height:24px;border-radius:3px;background:linear-gradient(#4a8af0,#3c7ae8 40%,#3670e0);border:1px solid #2a5cc8"></div>
<svg style="left:208px;top:8px" width="16" height="16" viewBox="0 0 16 16"><rect x="2" y="5" width="12" height="9" fill="#e8eef8" stroke="#8aa0c0"/><rect x="4" y="7" width="8" height="5" fill="#1a2a8a"/><circle cx="5" cy="4" r="3" fill="#f4f8fc"/></svg>
<span class="nw f11" style="left:226px;top:9px;color:#fff">5.178.81.81 - Удале...</span>
<div style="left:358px;top:3px;width:159px;height:26px;border-radius:3px;background:linear-gradient(#1a48b8,#1e4cbc 30%,#2250c4);border:1px solid #163c98"></div>
<svg style="left:368px;top:8px" width="16" height="16" viewBox="0 0 16 16"><circle cx="8" cy="8" r="7.5" fill="#2a50b0"/><path d="M1 6 C1 12 4 15.5 8 15.5 C12 15.5 15.5 12 15.5 8 C15.5 5 14 2 12 1 C13 4 12 7 10 8 C9 9.5 7 10 5.5 9 C4 8 3.5 6.5 4 4 C2.5 4.5 1 5 1 6Z" fill="#e86a1a"/></svg>
<span class="nw f11" style="left:387px;top:9px;color:#fff">Бесплатная помощь ...</span>
<span class="nw f11" style="left:1166px;top:10px;color:#fff;font-size:10.5px;letter-spacing:-0.2px">EN</span>
<div style="left:1201px;top:0;width:165px;height:30px;background:linear-gradient(#1890e8 0,#1a9ef0 2px,#12a0f2 6px,#0e98ee 20px,#0a84d8 30px);border-left:1px solid #0a5ab8"></div>
<svg style="left:1212px;top:7px" width="16" height="16" viewBox="0 0 16 16"><circle cx="8" cy="8" r="7" fill="#7ab820"/><path d="M8 3 L13.5 14 H2.5 Z" fill="#f0c818" stroke="#6a4a08" stroke-width="0.6"/><rect x="7.3" y="7" width="1.4" height="4" fill="#222"/></svg>
<svg style="left:1230px;top:7px" width="16" height="16" viewBox="0 0 16 16"><rect x="1" y="3" width="8" height="7" fill="#3a4a9a" stroke="#d8e0f0" stroke-width="0.8"/><rect x="6" y="1" width="8" height="7" fill="#3a4a9a" stroke="#d8e0f0" stroke-width="0.8"/><path d="M9 10 L15 16 M15 10 L9 16" stroke="#e02020" stroke-width="2"/></svg>
<svg style="left:1248px;top:7px" width="16" height="16" viewBox="0 0 16 16"><rect x="1" y="5" width="9" height="8" fill="#d8e8f8" stroke="#6a8ab8" stroke-width="0.8"/><path d="M11 6 A3 3 0 0 1 11 10 M13 4 A5 5 0 0 1 13 12 M15 2 A7 7 0 0 1 15 14" stroke="#48d848" stroke-width="1.2" fill="none"/></svg>
<svg style="left:1267px;top:7px" width="16" height="16" viewBox="0 0 16 16"><path d="M7 1 L13 3 V8 C13 12 10 14 7 15 C4 14 1 12 1 8 V3 Z" fill="#d82a2a" stroke="#f8e0e0" stroke-width="0.6"/><path d="M5 5.5 L9 9.5 M9 5.5 L5 9.5" stroke="#fff" stroke-width="1.5"/></svg>
<svg style="left:1284px;top:7px" width="16" height="16" viewBox="0 0 16 16"><circle cx="7" cy="7" r="6" fill="#707070" stroke="#d0d0d0" stroke-width="0.8"/><circle cx="7" cy="7" r="2.5" fill="#c8c8c8"/><path d="M9 14 L14 10" stroke="#a0c0f0" stroke-width="1.2"/></svg>
<svg style="left:1303px;top:7px" width="16" height="16" viewBox="0 0 16 16"><path d="M2 10 L10 6 L15 10 L7 14 Z" fill="#b8c0b8" stroke="#505850" stroke-width="0.8"/><path d="M6 2 L10 5 L7 8 Z" fill="#38b838"/></svg>
<span class="nw f11" style="left:1328px;top:9px;color:#fff">0:20</span>
</div>
</body></html>
